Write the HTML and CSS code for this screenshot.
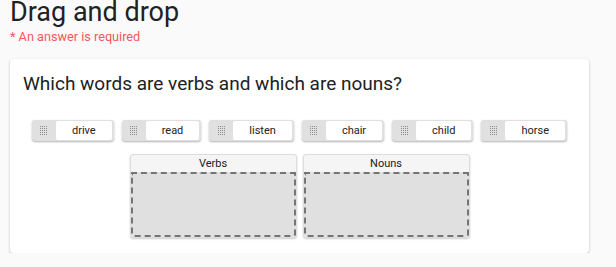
FILE: index.html
```html
<!DOCTYPE html>
<html lang="en">
<head>
    <meta charset="UTF-8">
    <meta name="viewport" content="width=device-width, initial-scale=1.0">
    <title>Drag and drop</title>
    <link rel="stylesheet" href="styles.css">
</head>
<body>
    <!-- shared dot pattern for the drag handles -->
    <svg class="defs" width="0" height="0" aria-hidden="true">
        <defs>
            <pattern id="dots" width="2" height="2" patternUnits="userSpaceOnUse">
                <rect width="1" height="1" fill="#8c8c8c"/>
            </pattern>
        </defs>
    </svg>

    <div class="page">
        <h1 class="page-title">Drag and drop</h1>
        <p class="required">* An answer is required</p>

        <div class="card">
            <h2 class="question">Which words are verbs and which are nouns?</h2>

            <!-- draggable words -->
            <div class="chips">
                <div class="chip"><span class="grip"><svg width="7" height="9"><rect width="7" height="9" fill="url(#dots)"/></svg></span><span class="chip-label">drive</span></div>
                <div class="chip"><span class="grip"><svg width="7" height="9"><rect width="7" height="9" fill="url(#dots)"/></svg></span><span class="chip-label">read</span></div>
                <div class="chip"><span class="grip"><svg width="7" height="9"><rect width="7" height="9" fill="url(#dots)"/></svg></span><span class="chip-label">listen</span></div>
                <div class="chip"><span class="grip"><svg width="7" height="9"><rect width="7" height="9" fill="url(#dots)"/></svg></span><span class="chip-label">chair</span></div>
                <div class="chip"><span class="grip"><svg width="7" height="9"><rect width="7" height="9" fill="url(#dots)"/></svg></span><span class="chip-label">child</span></div>
                <div class="chip"><span class="grip"><svg width="7" height="9"><rect width="7" height="9" fill="url(#dots)"/></svg></span><span class="chip-label">horse</span></div>
            </div>

            <!-- drop targets -->
            <div class="zones">
                <div class="zone">
                    <div class="zone-title">Verbs</div>
                    <div class="zone-drop"></div>
                </div>
                <div class="zone">
                    <div class="zone-title">Nouns</div>
                    <div class="zone-drop"></div>
                </div>
            </div>
        </div>
    </div>
</body>
</html>
```

FILE: styles.css
```css
* {
    box-sizing: border-box;
}

body {
    margin: 0;
    font-family: Roboto, 'Liberation Sans', sans-serif;
    background: #fafafa;
    color: #212121;
}

.defs {
    position: absolute;
}

.page {
    padding: 0 27px 0 10px;
}

.page-title {
    margin: 0;
    font-size: 27px;
    line-height: 24px;
    font-weight: 400;
}

.required {
    margin: 5px 0 0;
    font-size: 12.7px;
    line-height: 16px;
    color: #f7555d;
}

.card {
    margin-top: 14px;
    background: white;
    border-radius: 3px;
    box-shadow: 0 1px 3px rgba(0,0,0,0.2), 0 1px 1px rgba(0,0,0,0.14);
    padding: 13px 13px 15px;
}

.question {
    margin: 0;
    font-size: 19px;
    line-height: 24px;
    font-weight: 400;
}

.chips {
    display: flex;
    justify-content: center;
    gap: 8px;
    margin-top: 24px;
}

.chip {
    display: flex;
    align-items: stretch;
    height: 21px;
    padding: 1px 2px 1px 0;
    background: #e0e0e0;
    border-radius: 3px;
    box-shadow: 0 1px 2px rgba(0,0,0,0.3);
}

.grip {
    width: 24px;
    display: flex;
    align-items: center;
    justify-content: center;
}

.chip-label {
    display: flex;
    align-items: center;
    padding: 0 16px;
    background: white;
    border-radius: 2px;
    font-size: 11px;
}

.zones {
    display: flex;
    justify-content: center;
    gap: 6px;
    margin-top: 13px;
}

.zone {
    width: 167px;
    background: #f5f5f5;
    border: 1px solid #ddd;
    border-radius: 3px;
    box-shadow: 0 1px 2px rgba(0,0,0,0.2);
}

.zone-title {
    text-align: center;
    font-size: 11px;
    line-height: 17px;
}

.zone-drop {
    height: 65px;
    background: #e0e0e0;
    border: 2px dashed #757575;
    border-radius: 0 0 3px 3px;
}
```
